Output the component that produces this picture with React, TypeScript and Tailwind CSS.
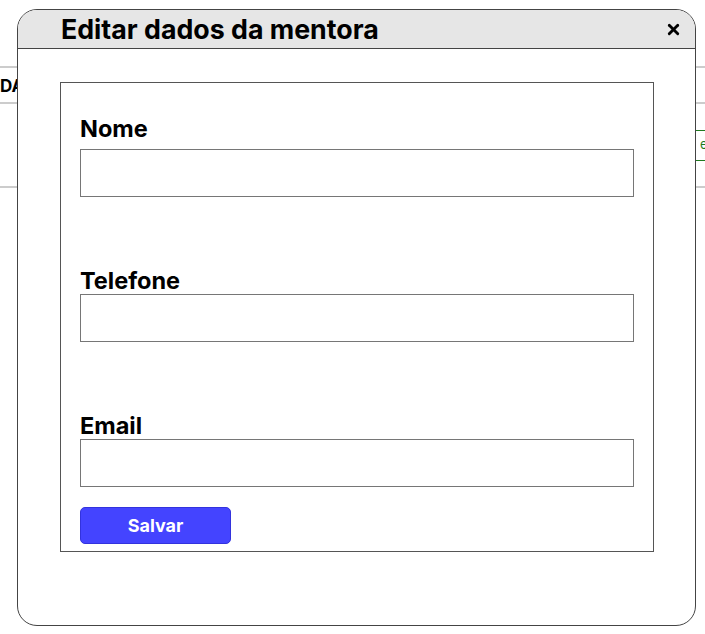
import { X } from "lucide-react";

function Field({ label, first }: { label: string; first?: boolean }) {
  return (
    <div className={first ? "" : "mt-[71px]"}>
      <label
        className={`block text-[23.5px] leading-[26px] font-bold text-black ${first ? "mb-[7px]" : ""}`}
      >
        {label}
      </label>
      <input
        type="text"
        className="block w-full h-[48px] border border-[#767676] bg-white px-2 outline-none"
      />
    </div>
  );
}

export default function App() {
  return (
    <div
      className="relative w-[705px] h-[634px] overflow-hidden bg-white"
      style={{ fontFamily: "Inter, 'Liberation Sans', sans-serif" }}
    >
      {/* page behind the modal */}
      <div className="pt-[66px] w-[760px]">
        <div className="border-t-2 border-b-2 border-[#cccccc] h-[38px] flex items-center pt-[4px]">
          <span className="text-[17px] font-bold text-black">DADOS DA MENTORA</span>
        </div>
        <div className="h-[84px] border-b-2 border-[#cccccc] flex items-center pl-[694px]">
          <button className="h-[31px] px-[5px] border border-[#1f7a1f] text-[13px] text-[#1f7a1f] bg-white">
            editar
          </button>
        </div>
      </div>

      {/* modal */}
      <div className="absolute left-[17px] top-[9px] w-[679px] h-[617px] bg-white border border-[#444444] rounded-[20px] overflow-hidden">
        <div className="h-[39px] bg-[#e6e6e6] border-b border-[#444444] flex items-center justify-between pl-[43px] pr-[13px]">
          <h2 className="text-[26.75px] font-bold text-black leading-none">Editar dados da mentora</h2>
          <button className="text-black">
            <X size={17} strokeWidth={4} />
          </button>
        </div>

        <div className="pl-[42px] pt-[33px]">
          <form className="w-[594px] border border-[#555555] px-[19px] pt-[33px] pb-[7px]">
            <Field label="Nome" first />
            <Field label="Telefone" />
            <Field label="Email" />
            <button
              type="button"
              className="mt-[20px] w-[151px] h-[37px] rounded-[5px] bg-[#4444ff] border border-[#3333dd] text-white text-[18px] font-bold"
            >
              Salvar
            </button>
          </form>
        </div>
      </div>
    </div>
  );
}
